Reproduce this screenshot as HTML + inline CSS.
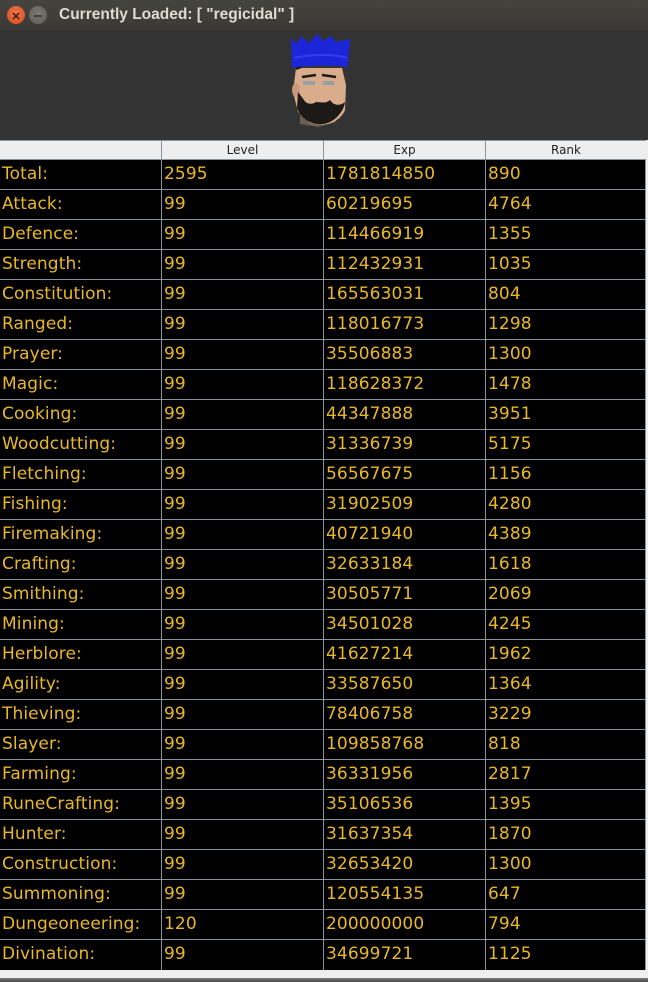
<!DOCTYPE html>
<html><head><style>
*{margin:0;padding:0;box-sizing:border-box}
body{width:648px;height:982px;background:#eeeeee;position:relative;overflow:hidden;font-family:"DejaVu Sans","Liberation Sans",sans-serif}
#title{position:absolute;left:0;top:0;width:648px;height:30px;background:linear-gradient(#45443f,#3a3935);color:#dfdbd2;font-size:15.5px;font-weight:bold;line-height:30px;font-family:"Liberation Sans",sans-serif}
#title span{position:absolute;left:59px;top:0}
.btn{position:absolute;top:6px;width:18px;height:18px;border-radius:50%}
#panel{position:absolute;left:0;top:30px;width:648px;height:110px;background:#333333}
#hdr{position:absolute;left:0;top:140px;width:646px;height:20px;background:#eeeeee;border-top:1px solid #8a929c;border-bottom:1px solid #8a929c}
.h{position:absolute;top:0;height:18px;font-size:12px;color:#222;text-align:center;line-height:19px;border-left:1px solid #8a929c}
#tbl{position:absolute;left:0;top:159px;width:646px;height:811px;background:#000;border-right:1px solid #8a929c}
.r{position:absolute;left:0;width:645px;height:30px;border-top:1px solid #8a929c}
.c{position:absolute;top:0;height:29px;line-height:29px;font-size:17px;color:#e9b824;padding-left:2px;white-space:nowrap;letter-spacing:0.1px}
.v{position:absolute;top:0;width:1px;height:811px;background:#8a929c}
#bot{position:absolute;left:0;top:978px;width:648px;height:4px;background:linear-gradient(#7a7a7a,#4a4a4a)}
</style></head><body>
<div id="title">
<div class="btn" style="left:7px;background:radial-gradient(circle at 50% 40%,#f3774a,#d24a1c);"><svg width="18" height="18"><path d="M6 6L12 12M12 6L6 12" stroke="#3a1a10" stroke-width="1.5"/></svg></div>
<div class="btn" style="left:29px;background:radial-gradient(circle at 50% 40%,#7b7a75,#5a5954);"><svg width="18" height="18"><path d="M5 9H13" stroke="#2e2e2c" stroke-width="1.5"/></svg></div>
<span>Currently Loaded: [ "regicidal" ]</span>
</div>
<div id="panel">
<svg width="648" height="110" style="position:absolute;left:0;top:0">
<path d="M300 82 L300 94 L318 97 L336 92 L334 80 Z" fill="#6a5e52"/>
<path d="M296 38 L342 38 L346 55 L345 80 C340 92 325 98 310 93 L298 82 L293 62 Z" fill="#d9ad8c"/>
<ellipse cx="296" cy="60" rx="4" ry="7" fill="#c99a7a"/>
<path d="M298 62 L297 78 C302 92 318 98 330 92 C338 88 344 80 345 72 C340 76 334 76 330 70 C326 74 320 72 316 72 C312 75 306 74 304 70 Z" fill="#1c1917"/>
<rect x="303" y="51" width="12" height="4" fill="#9aa0a0"/><rect x="323" y="51" width="11" height="4" fill="#9aa0a0"/>
<path d="M302 47 L316 45 M322 45 L336 47" stroke="#1a1a1a" stroke-width="2.5"/>
<path d="M296 40 C296 32 300 30 302 38 Z" fill="#1c1917"/>
<path d="M292 38 L291 8 L297 14 L301 6 L309 13 L317 4 L323 11 L331 6 L336 12 L350 9 L348 37 C335 35 305 35 292 38 Z" fill="#1c25d8"/>
<path d="M294 28 C310 24 335 24 347 28" stroke="#3040f0" stroke-width="2" fill="none"/>
</svg>
</div>
<div id="hdr">
<div class="h" style="left:161px;width:162px">Level</div>
<div class="h" style="left:323px;width:162px">Exp</div>
<div class="h" style="left:485px;width:161px">Rank</div>
</div>
<div id="tbl">
<div class="v" style="left:161px"></div><div class="v" style="left:323px"></div><div class="v" style="left:485px"></div>
</div>
<div id="bot"></div>
<script>
var d=[["Total:","2595","1781814850","890"],["Attack:","99","60219695","4764"],["Defence:","99","114466919","1355"],["Strength:","99","112432931","1035"],["Constitution:","99","165563031","804"],["Ranged:","99","118016773","1298"],["Prayer:","99","35506883","1300"],["Magic:","99","118628372","1478"],["Cooking:","99","44347888","3951"],["Woodcutting:","99","31336739","5175"],["Fletching:","99","56567675","1156"],["Fishing:","99","31902509","4280"],["Firemaking:","99","40721940","4389"],["Crafting:","99","32633184","1618"],["Smithing:","99","30505771","2069"],["Mining:","99","34501028","4245"],["Herblore:","99","41627214","1962"],["Agility:","99","33587650","1364"],["Thieving:","99","78406758","3229"],["Slayer:","99","109858768","818"],["Farming:","99","36331956","2817"],["RuneCrafting:","99","35106536","1395"],["Hunter:","99","31637354","1870"],["Construction:","99","32653420","1300"],["Summoning:","99","120554135","647"],["Dungeoneering:","120","200000000","794"],["Divination:","99","34699721","1125"]];
var t=document.getElementById('tbl'),x=[0,162,324,486],h='';
d.forEach(function(r,i){h+='<div class="r" style="top:'+(i*30)+'px">';r.forEach(function(c,j){h+='<div class="c" style="left:'+x[j]+'px">'+c+'</div>'});h+='</div>'});
t.insertAdjacentHTML('beforeend',h);
</script>
</body></html>
